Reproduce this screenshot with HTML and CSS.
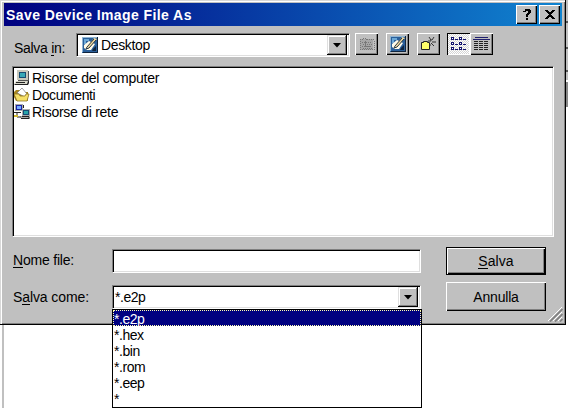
FILE: index.html
```
<!DOCTYPE html>
<html lang="it">
<head>
<meta charset="utf-8">
<title>Save Device Image File As</title>
<link rel="stylesheet" href="styles.css">
</head>
<body>
<svg class="defs" width="0" height="0" aria-hidden="true">
  <symbol id="desk" viewBox="0 0 16 16">
    <path fill="#2a5f9a" d="M0 0h16v16H0z"/>
    <path fill="#8fb4d2" d="M0 0h15v1H1v14H0z"/>
    <path fill="#6aa7d6" d="M2 2h5v2H4v3H2z"/>
    <path fill="#10243c" d="M15 0h1v16H1v-1h14z"/>
    <path fill="#fffbe9" d="M2 8l5-4 6 3-4 6H5l-3-2z"/>
    <path fill="#f0d9a0" d="M12 1l3 1-8 9-2-1z"/>
    <path fill="none" stroke="#29363d" d="M5 10l7-8M7 11l7-8M5 10l-1 2 3-1"/>
    <path fill="#10243c" d="M11 12l3-3v5h-4z"/>
  </symbol>
  <symbol id="pc" viewBox="0 0 16 16">
    <path fill="#c8c8bb" d="M3 0h11v10H3z"/>
    <path fill="#555" d="M14 1h1v10H4v-1h10z"/>
    <path fill="#164c72" d="M5 2h7v6H5z"/><path fill="#36a8b6" d="M6 3h5v4H6z"/>
    <path fill="#d7d7ca" d="M2 11h12l-1 3H0z"/>
    <path fill="#222" d="M1 14h12l1-3h1v2l-1 2H0zM2 12h9v1H2z"/>
  </symbol>
</svg>
<main class="screen">
  <section class="dialog">
    <header class="title">
      <h1>Save Device Image File As</h1>
      <button class="cap"><svg width="12" height="13" viewBox="0 0 12 13"><path d="M2 3h2V1h5v1h1v3H9v1H8v1H7v2H5V6h1V5h1V3H5v1H2zM5 10h2v2H5z"/></svg></button>
      <button class="cap"><svg width="12" height="13" viewBox="0 0 12 13"><path d="M1 2h3v1h1v1h2V3h1V2h3v1h-1v1H9v1H8v1H7v1h1v1h1v1h1v1h1v1H8v-1H7V9H5v1H4v1H1v-1h1V9h1V8h1V7h1V6H4V5H3V4H2V3H1z"/></svg></button>
    </header>
    <div class="tools">
      <label class="look">Salva <u>i</u>n:</label>
      <div class="field place">
        <svg width="16" height="16"><use href="#desk"/></svg><span class="desk-text">Desktop</span>
        <button class="arrow"><i></i></button>
      </div>
      <button class="tool up"><svg width="16" height="14" viewBox="0 0 16 14" shape-rendering="crispEdges"><path fill="#a7a7a7" d="M1 2h13v11H1z"/><path fill="none" stroke="#777" stroke-dasharray="1 1" d="M1 2.500h2V1h4v1.500h8v10H1.500v-10M3 5.500h10M4 7.500h10M3 9.500h10M4 11.500h10"/><path fill="none" stroke="#777" d="M5 5h3M6.500 4v5h4"/></svg></button>
      <button class="tool desk"><svg width="16" height="16"><use href="#desk"/></svg></button>
      <button class="tool new"><svg width="17" height="16" viewBox="0 0 17 16"><path fill="#ffff69" stroke="#222" d="M1.500 6.500h2v-1h4v1h2v7h-8z"/><path fill="none" stroke="#333" d="M9 1l2 3M14 1l-2 3M8 5h3M12 6h4M11 7l3 3M10 8v2M11 3v2"/></svg></button>
      <button class="tool list pressed"><svg width="17" height="15" viewBox="0 0 17 15" shape-rendering="crispEdges"><g fill="none" stroke="#14146e"><path fill="#fff" d="M1.500.500h2v2h-2zM9.500.500h2v2h-2zM1.500 5.500h2v2h-2zM9.500 5.500h2v2h-2zM1.500 10.500h2v2h-2zM9.500 10.500h2v2h-2z"/><path d="M5 2.500h3M13 2.500h3M5 7.500h3M13 7.500h3M5 12.500h3M13 12.500h3"/></g></svg></button>
      <button class="tool"><svg width="17" height="15" viewBox="0 0 17 15" shape-rendering="crispEdges"><path fill="none" stroke="#20206e" d="M2 .500h13M0 2.500h17"/><path fill="none" stroke="#222" stroke-dasharray="4 1" d="M1 4.500h15M1 6.500h15M1 8.500h15M1 10.500h15M1 12.500h15"/></svg></button>
    </div>
    <ul class="files">
      <li><svg width="16" height="16"><use href="#pc"/></svg><span class="t1">Risorse del computer</span></li>
      <li><svg width="16" height="16" viewBox="0 0 16 16"><path fill="#a88722" d="M0 5l2-2h4l1 2h7v9H2L0 10z"/><path fill="#fff" stroke="#777" stroke-width=".7" d="M3 6l5-5 5 6-2 3z"/><path fill="#f5df67" stroke="#917623" stroke-width=".8" d="M0 7h5l1 2h5l1-2h3l-2 7H3z"/></svg><span class="t2">Documenti</span></li>
      <li><svg width="16" height="16" viewBox="0 0 16 16"><path fill="#aaa" d="M1 0h8v7H1zM8 5h8v7H8zM6 12h9l1 3H7z"/><path fill="#1b25a7" d="M2 1h6v5H2z"/><path fill="#77adff" d="M3 2h4v3H3z"/><path fill="#144b74" d="M9 6h6v5H9z"/><path fill="#28a5a9" d="M10 7h4v3h-4z"/><path fill="none" stroke="#222" d="M0 8.500h7M9.500 1v3M8 12.500h7v2H7M3 9v4h4"/><path fill="#d0b830" d="M0 11h4v2H0z"/></svg><span class="t3">Risorse di rete</span></li>
    </ul>
    <div class="form">
      <label class="name"><u>N</u>ome file:</label>
      <div class="field"></div>
      <button class="push default"><span><u>S</u>alva</span></button>
      <label class="type">S<u>a</u>lva come:</label>
      <div class="field type-field"><span>*.e2p</span><button class="arrow"><i></i></button>
        <ul class="menu">
          <li class="selected">*.e2p</li><li>*.hex</li><li>*.bin</li><li>*.rom</li><li>*.eep</li><li>*</li>
        </ul>
      </div>
      <button class="push cancel"><span>Annulla</span></button>
    </div>
    <svg class="grip" width="15" height="15" viewBox="0 0 15 15"><path stroke="#fff" d="M0 14L14 0M5 14l9-9M10 14l4-4"/><path stroke="#808080" stroke-width="1.700" d="M2 14.500L14.500 2M7 14.500L14.500 7M12 14.500l2.500-2.500"/></svg>
  </section>
  <aside class="behind"><i></i><i></i><i></i><i></i><i></i></aside>
</main>
</body>
</html>
```
FILE: styles.css
```
* { box-sizing: border-box; }
body { margin: 0; overflow: hidden; background: #fff; color: #000; font: 14px/16px "Liberation Sans", Arial, sans-serif; }
button { margin: 0; padding: 0; border: 0; font: inherit; color: #000; background: #c0c0c0; }
svg { display: block; flex: none; }
ul { list-style: none; margin: 0; padding: 0; }
u { text-decoration: none; border-bottom: 1px solid #000; display: inline-block; line-height: 14px; }
.defs { position: absolute; }
.screen { display: flex; align-items: flex-start; width: 568px; height: 408px; background: linear-gradient(90deg, #fff 2px, #c0c0c0 2px 4px, #fff 4px); }
.dialog { position: relative; width: 566px; height: 325px; background: #c0c0c0; border: 1px solid #000; border-width: 0 1px 1px 0; box-shadow: inset 1px 1px #d8d8d8, inset 2px 2px #fff, inset -1px -1px #808080; padding: 3px 3px 0 4px; }
.title { height: 23px; display: flex; align-items: center; background: linear-gradient(90deg, #000080, #1084d0); padding: 0 2px; }
h1 { flex: 1; margin: 0; color: #fff; font-size: 14px; line-height: 20px; letter-spacing: .42px; white-space: nowrap; }
.cap { width: 21px; height: 19px; display: flex; justify-content: center; align-items: center; margin-left: 2px; box-shadow: inset 1px 1px #fff, inset -1px -1px #000, inset -2px -2px #808080; }
.tools { display: flex; margin-top: 7px; padding-left: 10px; height: 33px; }
.look { width: 62px; padding-top: 7px; letter-spacing: -.3px; }
.field { height: 24px; background: #fff; border: 1px solid; border-color: #808080 #fff #fff #808080; box-shadow: inset 1px 1px #000, inset -1px -1px #dfdfdf; display: flex; align-items: center; padding: 2px; }
.place { width: 274px; padding-left: 5px; margin-right: 5px; }
.place span { flex: 1; padding-left: 3px; letter-spacing: -.35px; }
.arrow { width: 20px; height: 20px; display: grid; place-items: center; box-shadow: inset -1px -1px #000, inset 1px 1px #dfdfdf, inset -2px -2px #808080, inset 2px 2px #fff; }
.arrow i { width: 9px; height: 5px; background: #000; clip-path: polygon(0 0, 100% 0, 50% 100%); }
.tool { width: 23px; height: 22px; display: flex; align-items: center; justify-content: center; box-shadow: inset 1px 1px #fff, inset -1px -1px #000, inset -2px -2px #808080; }
.desk { margin-left: 8px; }
.new { margin: 0 7px 0 8px; }
.pressed { background: repeating-conic-gradient(#d4d4d4 0 25%, #fff 0 50%) 0 0 / 2px 2px; box-shadow: inset 1px 1px #000, inset -1px -1px #fff; }
.files { height: 171px; width: 542px; margin-left: 8px; background: #fff; border: 1px solid; border-color: #808080 #fff #fff #808080; box-shadow: inset 1px 1px #000, inset -1px -1px #dfdfdf; padding: 2px 1px; }
.files li { height: 17px; display: flex; align-items: center; }
.files span { margin-left: 2px; }
.t1 { letter-spacing: -.26px; }
.t2 { letter-spacing: -.4px; }
.t3 { letter-spacing: -.27px; }
.form { display: grid; grid-template-columns: 99px 309px 100px; grid-template-rows: 28px 29px; row-gap: 7px; column-gap: 0; padding: 10px 0 0 9px; }
.form > .field { margin-top: 2px; }
.form > .type-field { position: relative; margin-top: 3px; }
.name { padding-top: 5px; letter-spacing: -.2px; }
.type { padding-top: 7px; letter-spacing: -.1px; }
.form .push { margin-left: 25px; width: 100px; }
.push { box-shadow: inset 1px 1px #fff, inset -1px -1px #000, inset -2px -2px #808080; letter-spacing: .1px; }
.cancel { letter-spacing: -.2px; }
.default { border: 1px solid #000; }
.type-field > span { flex: 1; }
.type-field { letter-spacing: -.45px; }
.menu { position: absolute; z-index: 2; left: -1px; top: 23px; width: 310px; height: 99px; border: 1px solid #000; background: #fff; }
.menu li { height: 16px; padding-left: 1px; line-height: 18px; }
.menu .selected { background: #000080; color: #fff; outline: 1px dotted #ffffb0; outline-offset: -1px; }
.grip { position: absolute; right: 2px; bottom: 2px; }
.behind { width: 2px; height: 325px; }
.behind i { display: block; height: 23px; background: #c0c0c0; border-bottom: 2px solid #555; }
.behind i:nth-child(2) { height: 26px; }
.behind i:nth-child(4) { height: 10px; border-color: #fff; }
.behind i:nth-child(5) { height: 25px; background: #888; border: 0; }
```
